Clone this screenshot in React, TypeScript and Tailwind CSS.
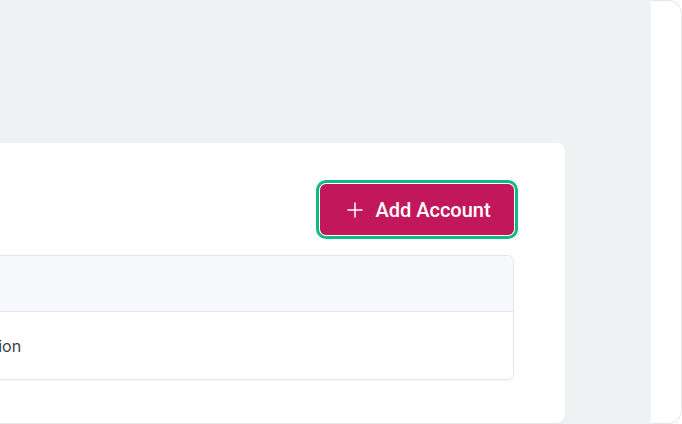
import { Plus } from 'lucide-react'

export default function App() {
  return (
    <div
      className="flex h-[424px] w-[682px] overflow-hidden bg-white"
      style={{ fontFamily: 'Inter, "Noto Sans", sans-serif' }}
    >
      {/* main area */}
      <div className="h-full w-[651px] shrink-0 overflow-hidden bg-[#f0f1f3]">
        <div className="ml-[-133px] mt-[143px] w-[698px] rounded-[8px] bg-white px-[51px] pt-[41px] pb-[43px] shadow-[0_1px_2px_rgba(0,0,0,0.05)]">
          <div className="flex justify-end">
            <button
              className="flex h-[51px] w-[194px] items-center justify-center gap-[8px] rounded-[6px] bg-[#c2185b] text-[20px] font-medium text-white ring-[3px] ring-[#12b886] ring-offset-1 ring-offset-white"
              style={{ fontFamily: 'Roboto, "Liberation Sans", sans-serif' }}
            >
              <Plus size={24} strokeWidth={1.5} />
              <span>Add Account</span>
            </button>
          </div>
          <div className="mt-[20px] overflow-hidden rounded-[6px] border border-[#e5e7eb] shadow-[0_1px_2px_rgba(0,0,0,0.04)]">
            <div className="h-[56px] border-b border-[#e5e7eb] bg-[#f7f8fa]" />
            <div className="flex h-[67px] items-center px-5 text-[16px] text-[#3a3f47]">
              Production
            </div>
          </div>
        </div>
      </div>
      {/* right strip */}
      <div className="h-full flex-1 rounded-r-[14px] border-y border-r border-[#e6e7ea] bg-white" />
    </div>
  )
}
